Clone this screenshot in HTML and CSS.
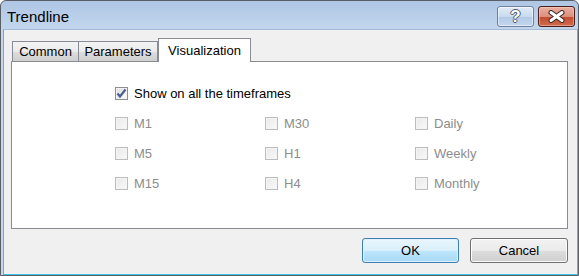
FILE: index.html
```html
<!DOCTYPE html>
<html lang="en">
<head>
  <meta charset="UTF-8">
  <title>Trendline</title>
  <link rel="stylesheet" href="styles.css">
</head>
<body>
  <div class="window">
    <div class="titlebar">
      <span class="title">Trendline</span>
      <div class="caption-buttons">
        <div class="cap-btn help-btn"><span class="help-glyph">?</span></div>
        <div class="cap-btn close-btn">
          <svg width="21" height="13" viewBox="0 0 21 13">
            <path d="M5 2.5 L16 10.5 M16 2.5 L5 10.5" stroke="#3a2a28" stroke-width="5" stroke-linecap="round"/>
            <path d="M5 2.5 L16 10.5 M16 2.5 L5 10.5" stroke="#ffffff" stroke-width="3" stroke-linecap="round"/>
          </svg>
        </div>
      </div>
    </div>
    <div class="client">
      <div class="tabs">
        <div class="tab tab-common">Common</div>
        <div class="tab tab-params">Parameters</div>
        <div class="tab tab-active">Visualization</div>
      </div>
      <div class="panel">
        <label class="check-row">
          <span class="box box-checked">
            <svg width="11" height="11" viewBox="0 0 11 11">
              <path d="M1.5 5.5 L4 8.5 L9.5 1.5" fill="none" stroke="#4a5e92" stroke-width="2.2"/>
            </svg>
          </span>
          <span class="label">Show on all the timeframes</span>
        </label>
        <div class="frames">
          <label class="check-row disabled"><span class="box"></span><span class="label">M1</span></label>
          <label class="check-row disabled"><span class="box"></span><span class="label">M30</span></label>
          <label class="check-row disabled"><span class="box"></span><span class="label">Daily</span></label>
          <label class="check-row disabled"><span class="box"></span><span class="label">M5</span></label>
          <label class="check-row disabled"><span class="box"></span><span class="label">H1</span></label>
          <label class="check-row disabled"><span class="box"></span><span class="label">Weekly</span></label>
          <label class="check-row disabled"><span class="box"></span><span class="label">M15</span></label>
          <label class="check-row disabled"><span class="box"></span><span class="label">H4</span></label>
          <label class="check-row disabled"><span class="box"></span><span class="label">Monthly</span></label>
        </div>
      </div>
      <div class="actions">
        <button class="btn btn-default">OK</button>
        <button class="btn">Cancel</button>
      </div>
    </div>
  </div>
</body>
</html>
```

FILE: styles.css
```css
* {
  box-sizing: border-box;
  margin: 0;
  padding: 0;
}

body {
  font-family: 'Liberation Sans', Arial, sans-serif;
  font-size: 13px;
  background: #ffffff;
}

.window {
  width: 579px;
  height: 276px;
  border: 1px solid #5a5f66;
  border-radius: 6px 6px 0 0;
  background: linear-gradient(#aec6e4, #c4d7ee 30px, #c4d7ee);
  display: flex;
  flex-direction: column;
  overflow: hidden;
}

.titlebar {
  height: 28px;
  display: flex;
  align-items: center;
  justify-content: space-between;
  padding: 0 3px 0 6px;
}

.title {
  font-size: 15px;
  color: #000;
  margin-top: 2px;
}

.caption-buttons {
  display: flex;
  gap: 4px;
  margin-top: 3px;
}

.cap-btn {
  width: 37px;
  height: 21px;
  border-radius: 3px;
  display: flex;
  align-items: center;
  justify-content: center;
}

.help-btn {
  border: 1px solid #6f819c;
  background: linear-gradient(#e2ebf6, #c9daee 50%, #b2c9e6 51%, #c3d6ee);
  box-shadow: inset 0 0 0 1px rgba(255, 255, 255, 0.5);
}

.help-glyph {
  font-weight: bold;
  font-size: 17px;
  line-height: 17px;
  color: #fff;
  text-shadow: -1px 0 #4d5a6e, 1px 0 #4d5a6e, 0 -1px #4d5a6e, 0 1px #4d5a6e;
}

.close-btn {
  border: 1px solid #4a1d1a;
  background: linear-gradient(#eab0a2, #dc8f7c 50%, #c34a2e 51%, #d06c4e);
  box-shadow: inset 0 0 0 1px rgba(255, 220, 210, 0.45);
}

.client {
  flex: 1;
  margin-left: 2px;
  background: #f0f0f0;
  border: 1px solid #3cc0ee;
  border-top-color: #a4bbd8;
  display: flex;
  flex-direction: column;
}

.tabs {
  display: flex;
  align-items: flex-end;
  height: 23px;
  margin-top: 8px;
  padding-left: 8px;
}

.tab {
  height: 20px;
  display: flex;
  align-items: center;
  justify-content: center;
  border: 1px solid #898c95;
  border-bottom: none;
  background: linear-gradient(#f3f3f3, #ebebeb 50%, #dddddd 51%, #cfcfcf);
  color: #000;
  white-space: nowrap;
}

.tab-common {
  width: 67px;
}

.tab-params {
  margin-left: -1px;
  width: 80px;
}

.tab-active {
  height: 24px;
  width: 93px;
  margin-bottom: -1px;
  align-items: flex-start;
  padding-top: 4px;
  background: #fff;
  position: relative;
  z-index: 1;
}

.panel {
  margin-left: 7px;
  width: 557px;
  height: 168px;
  border: 1px solid #898c95;
  background: #fff;
  padding: 16px 0 0 103px;
}

.check-row {
  display: flex;
  align-items: center;
  height: 30px;
  gap: 6px;
  color: #000;
}

.check-row.disabled {
  color: #8d8d8d;
}

.frames {
  display: grid;
  grid-template-columns: repeat(3, 150px);
}

.box {
  width: 13px;
  height: 13px;
  border: 1px solid #bdbdbd;
  background: linear-gradient(135deg, #e9e9e9, #f9f9f9);
  box-shadow: inset 0 0 0 1px #f4f4f4;
  display: flex;
  align-items: center;
  justify-content: center;
}

.box-checked {
  border-color: #8e8f8f;
  background: linear-gradient(135deg, #dcdcdc, #ffffff);
  box-shadow: inset 0 0 0 1px #f2f2f2;
}

.actions {
  display: flex;
  justify-content: flex-end;
  gap: 11px;
  margin-top: 9px;
  padding-right: 9px;
}

.btn {
  width: 98px;
  height: 25px;
  font-family: 'Liberation Sans', Arial, sans-serif;
  font-size: 13px;
  color: #000;
  border: 1px solid #707070;
  border-radius: 3px;
  background: linear-gradient(#f2f2f2, #ebebeb 50%, #dddddd 51%, #cfcfcf);
  box-shadow: inset 0 0 0 1px #fcfcfc;
}

.btn-default {
  width: 97px;
  border-color: #3c7fb1;
  background: linear-gradient(#eaf6fd, #d9f0fc 50%, #bee6fd 51%, #a7d9f5);
  box-shadow: inset 0 0 0 1px #e0f1fb;
}
```
